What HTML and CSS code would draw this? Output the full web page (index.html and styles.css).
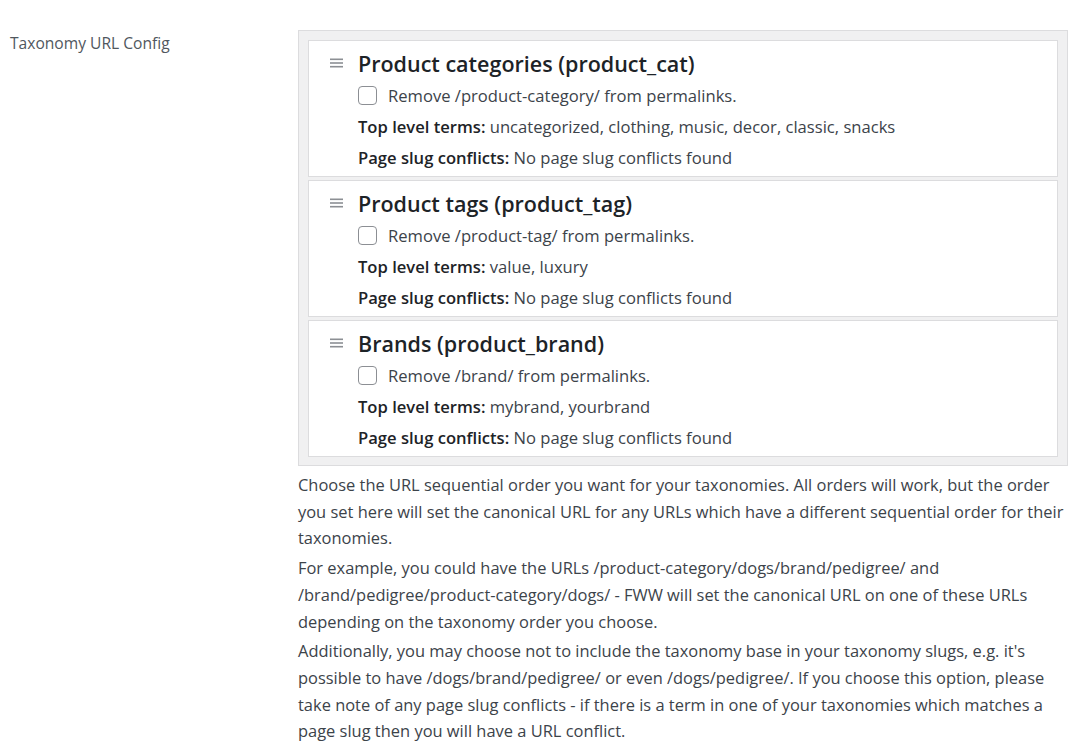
FILE: index.html
```html
<!DOCTYPE html>
<html>
<head>
<meta charset="utf-8">
<link rel="stylesheet" href="styles.css">
</head>
<body>
<div class="row">
  <div class="label">Taxonomy URL Config</div>
  <div class="field">
    <div class="sortable">
      <div class="item">
        <div class="handle"><svg width="13" height="10" viewBox="0 0 13 10"><rect x="0" y="0.5" width="13" height="1.6" fill="#8c8f94"/><rect x="0" y="4.2" width="13" height="1.6" fill="#8c8f94"/><rect x="0" y="7.9" width="13" height="1.6" fill="#8c8f94"/></svg></div>
        <div class="content">
          <h3 class="title">Product categories (product_cat)</h3>
          <label class="line check"><span class="box"></span>Remove /product-category/ from permalinks.</label>
          <div class="line"><b>Top level terms:</b> uncategorized, clothing, music, decor, classic, snacks</div>
          <div class="line"><b>Page slug conflicts:</b> No page slug conflicts found</div>
        </div>
      </div>
      <div class="item">
        <div class="handle"><svg width="13" height="10" viewBox="0 0 13 10"><rect x="0" y="0.5" width="13" height="1.6" fill="#8c8f94"/><rect x="0" y="4.2" width="13" height="1.6" fill="#8c8f94"/><rect x="0" y="7.9" width="13" height="1.6" fill="#8c8f94"/></svg></div>
        <div class="content">
          <h3 class="title">Product tags (product_tag)</h3>
          <label class="line check"><span class="box"></span>Remove /product-tag/ from permalinks.</label>
          <div class="line"><b>Top level terms:</b> value, luxury</div>
          <div class="line"><b>Page slug conflicts:</b> No page slug conflicts found</div>
        </div>
      </div>
      <div class="item">
        <div class="handle"><svg width="13" height="10" viewBox="0 0 13 10"><rect x="0" y="0.5" width="13" height="1.6" fill="#8c8f94"/><rect x="0" y="4.2" width="13" height="1.6" fill="#8c8f94"/><rect x="0" y="7.9" width="13" height="1.6" fill="#8c8f94"/></svg></div>
        <div class="content">
          <h3 class="title">Brands (product_brand)</h3>
          <label class="line check"><span class="box"></span>Remove /brand/ from permalinks.</label>
          <div class="line"><b>Top level terms:</b> mybrand, yourbrand</div>
          <div class="line"><b>Page slug conflicts:</b> No page slug conflicts found</div>
        </div>
      </div>
    </div>
    <p class="desc">Choose the URL sequential order you want for your taxonomies. All orders will work, but the order you set here will set the canonical URL for any URLs which have a different sequential order for their taxonomies.</p>
    <p class="desc">For example, you could have the URLs /product-category/dogs/brand/pedigree/ and /brand/pedigree/product-category/dogs/ - FWW will set the canonical URL on one of these URLs depending on the taxonomy order you choose.</p>
    <p class="desc">Additionally, you may choose not to include the taxonomy base in your taxonomy slugs, e.g. it's possible to have /dogs/brand/pedigree/ or even /dogs/pedigree/. If you choose this option, please take note of any page slug conflicts - if there is a term in one of your taxonomies which matches a page slug then you will have a URL conflict.</p>
  </div>
</div>
</body>
</html>
```

FILE: styles.css
```css
html, body {
  margin: 0;
  padding: 0;
  background: #ffffff;
}
body {
  font-family: "Open Sans", "Noto Sans", sans-serif;
  font-size: 16.6px;
  color: #3c434a;
  padding-top: 30px;
}
.row {
  display: flex;
}
.label {
  width: 288px;
  padding-left: 10px;
  line-height: 26px;
  color: #50575e;
  font-size: 15.6px;
  flex: none;
}
.field {
  width: 771px;
  flex: none;
}
.sortable {
  width: 770px;
  box-sizing: border-box;
  background: #f0f0f1;
  border: 1px solid #dcdcde;
  padding: 9px 9px 8px 9px;
  display: flex;
  flex-direction: column;
  gap: 3px;
}
.item {
  background: #ffffff;
  border: 1px solid #dcdcde;
  height: 137px;
  box-sizing: border-box;
  padding: 7px 10px 3px 21px;
  display: flex;
}
.handle {
  width: 13px;
  padding-top: 10px;
  margin-right: 15px;
  flex: none;
}
.handle svg {
  display: block;
}
.content {
  flex: 1;
}
.title {
  margin: 0;
  font-size: 21.5px;
  font-weight: 600;
  line-height: 32px;
  color: #1d2327;
}
.line {
  display: flex;
  align-items: center;
  height: 31px;
  white-space: pre;
}
.line b {
  font-weight: 600;
  color: #1d2327;
}
.check {
  gap: 11px;
}
.box {
  width: 17px;
  height: 17px;
  border: 1px solid #8c8f94;
  border-radius: 4px;
  background: #fff;
  flex: none;
}
.desc {
  margin: 3px 0 0 0;
  line-height: 26.7px;
  font-size: 16.45px;
}
.desc:first-of-type {
  margin-top: 6px;
}
```
